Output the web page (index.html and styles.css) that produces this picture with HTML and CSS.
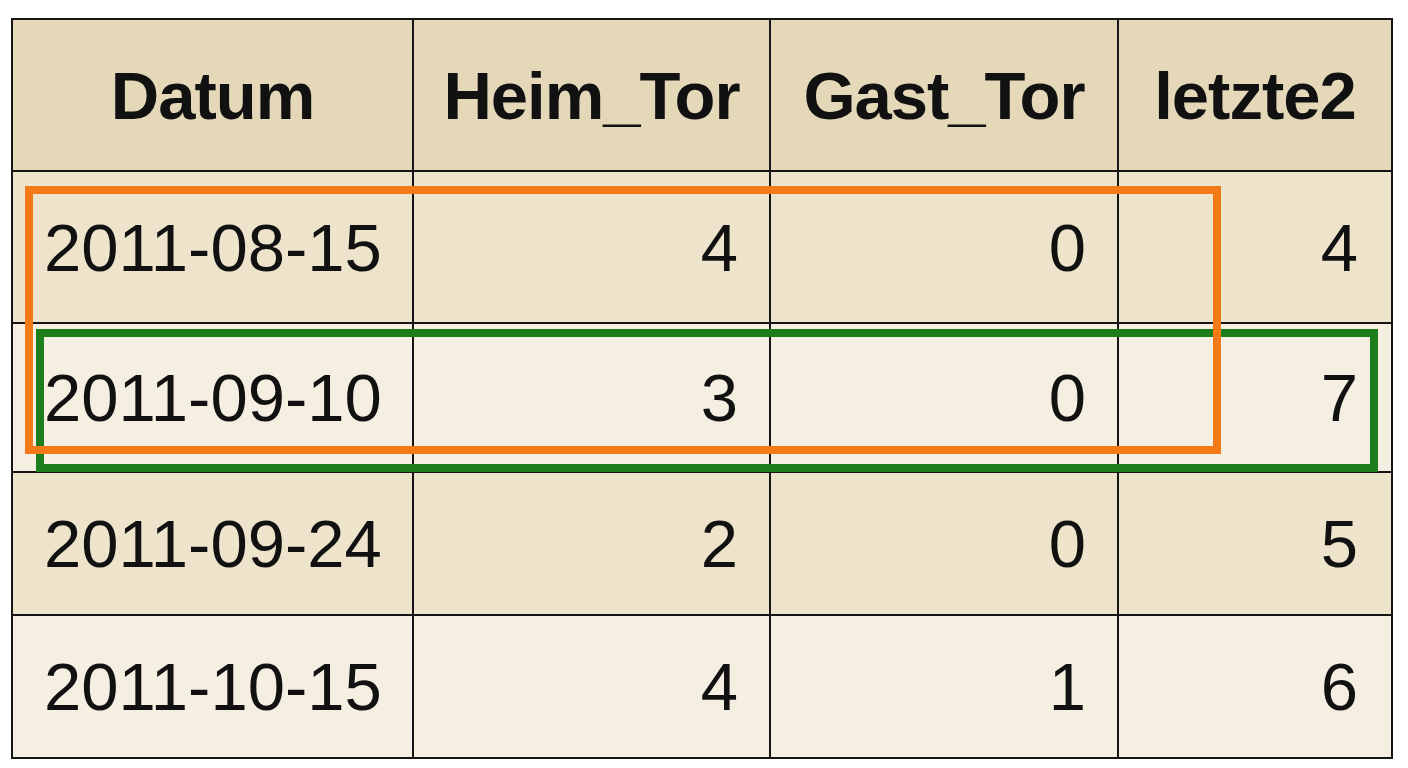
FILE: index.html
```html
<!DOCTYPE html>
<html lang="de">
<head>
<meta charset="utf-8">
<title>Tabelle</title>
<link rel="stylesheet" href="styles.css">
</head>
<body>
<div class="frame">
  <table class="data">
    <colgroup>
      <col class="c-date">
      <col class="c-heim">
      <col class="c-gast">
      <col class="c-letzte">
    </colgroup>
    <thead>
      <tr class="head"><th>Datum</th><th>Heim_Tor</th><th>Gast_Tor</th><th>letzte2</th></tr>
    </thead>
    <tbody>
      <tr class="r1 odd"><td class="date">2011-08-15</td><td class="num">4</td><td class="num">0</td><td class="num last">4</td></tr>
      <tr class="r2 even"><td class="date">2011-09-10</td><td class="num">3</td><td class="num">0</td><td class="num last">7</td></tr>
      <tr class="r3 odd"><td class="date">2011-09-24</td><td class="num">2</td><td class="num">0</td><td class="num last">5</td></tr>
      <tr class="r4 even"><td class="date">2011-10-15</td><td class="num">4</td><td class="num">1</td><td class="num last">6</td></tr>
    </tbody>
  </table>
  <div class="mark mark-green"></div>
  <div class="mark mark-orange"></div>
</div>
</body>
</html>
```

FILE: styles.css
```css
html, body {
  margin: 0;
  padding: 0;
  background: #ffffff;
}

.frame {
  position: relative;
  padding: 18px 0 0 11px;
  width: 1408px;
  height: 768px;
  box-sizing: border-box;
}

.data {
  border-collapse: collapse;
  table-layout: fixed;
  width: 1380px;
  font-family: "Liberation Sans", Arial, sans-serif;
  font-size: 67px;
  letter-spacing: 0;
  color: #111111;
}

.data th,
.data td {
  border: 2.5px solid #151515;
  padding: 0 31px 0 31px;
  line-height: 1;
  white-space: nowrap;
}

.c-date { width: 401px; }
.c-heim { width: 357px; }
.c-gast { width: 348px; }
.c-letzte { width: 274px; }

.head th {
  height: 150px;
  background: #e4d8b9;
  font-weight: bold;
  text-align: center;
  padding: 0;
  letter-spacing: -1px;
}

.r1 td { height: 150px; }
.r2 td { height: 147px; }
.r3 td { height: 141px; }
.r4 td { height: 141px; }

.odd td { background: #eee4cb; }
.even td { background: #f4efe0; }

.date { text-align: left; }
.data td.date { padding-right: 0; }
.num { text-align: right; }
.data td.last { padding-right: 33px; }

.mark {
  position: absolute;
  box-sizing: border-box;
  border: 8px solid;
}

.mark-orange {
  left: 25px;
  top: 186px;
  width: 1196px;
  height: 268px;
  border-color: #f47a18;
}

.mark-green {
  left: 36px;
  top: 329px;
  width: 1342px;
  height: 143px;
  border-color: #1c7e1c;
}
```
